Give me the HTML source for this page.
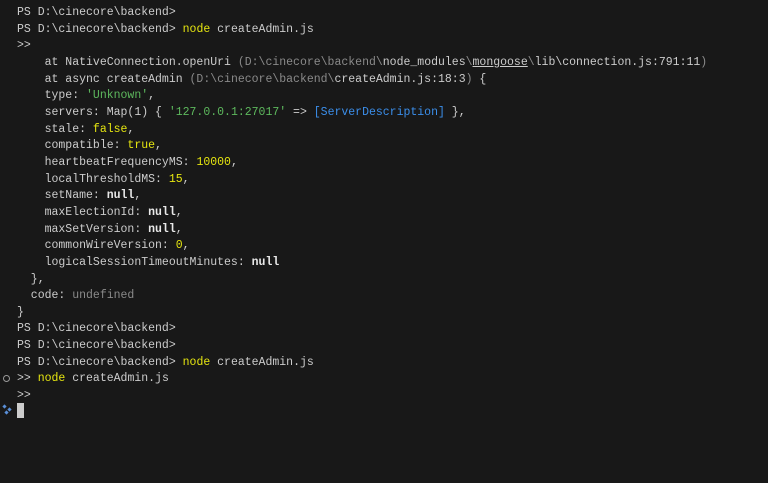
<!DOCTYPE html><html><head><style>
body{margin:0;background:#181818;width:768px;height:483px;overflow:hidden;position:relative}
pre{margin:0;position:absolute;left:17px;top:5px;font-family:"Liberation Mono",monospace;font-size:11.5px;line-height:16.65px;color:#cccccc}
.y{color:#e5e510}.g{color:#5db85d}.c{color:#3b8eea}.d{color:#8a8a8a}.b{font-weight:bold;color:#e8e8e8}.u{text-decoration:underline}
.cur{position:absolute;left:17px;top:403px;width:7px;height:15px;background:#cccccc}
.dot{position:absolute;left:3px;top:375px;width:5px;height:5px;border:1px solid #999;border-radius:50%}
</style></head><body>
<pre>PS D:\cinecore\backend&gt;
PS D:\cinecore\backend&gt; <span class="y">node</span> createAdmin.js
&gt;&gt;
    at NativeConnection.openUri <span class="d">(D:\cinecore\backend\</span>node_modules<span class="d">\</span><span class="u">mongoose</span><span class="d">\</span>lib\connection.js:791:11<span class="d">)</span>
    at async createAdmin <span class="d">(D:\cinecore\backend\</span>createAdmin.js:18:3<span class="d">)</span> {
    type: <span class="g">'Unknown'</span>,
    servers: Map(1) { <span class="g">'127.0.0.1:27017'</span> =&gt; <span class="c">[ServerDescription]</span> },
    stale: <span class="y">false</span>,
    compatible: <span class="y">true</span>,
    heartbeatFrequencyMS: <span class="y">10000</span>,
    localThresholdMS: <span class="y">15</span>,
    setName: <span class="b">null</span>,
    maxElectionId: <span class="b">null</span>,
    maxSetVersion: <span class="b">null</span>,
    commonWireVersion: <span class="y">0</span>,
    logicalSessionTimeoutMinutes: <span class="b">null</span>
  },
  code: <span class="d">undefined</span>
}
PS D:\cinecore\backend&gt;
PS D:\cinecore\backend&gt;
PS D:\cinecore\backend&gt; <span class="y">node</span> createAdmin.js
&gt;&gt; <span class="y">node</span> createAdmin.js
&gt;&gt;</pre>
<div class="dot"></div>
<svg style="position:absolute;left:2px;top:404px" width="12" height="12"><g fill="#5a8fd8"><rect x="1" y="1" width="3" height="3" transform="rotate(45 2.5 2.5)"/><rect x="6" y="4" width="3" height="3" transform="rotate(45 7.5 5.5)"/><rect x="3" y="7" width="3" height="3" transform="rotate(45 4.5 8.5)"/></g></svg>
<div class="cur"></div>
</body></html>
